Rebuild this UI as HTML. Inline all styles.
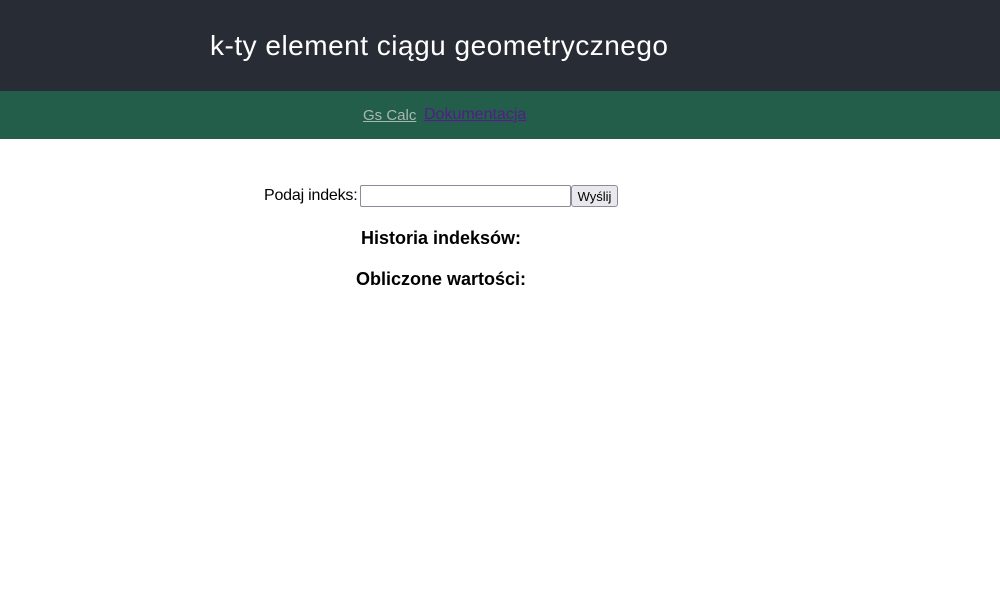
<!DOCTYPE html>
<html><head><meta charset="utf-8"><style>
body{margin:0;width:1000px;height:600px;background:#fff;font-family:"Liberation Sans",sans-serif;position:relative;overflow:hidden}
.hdr{position:absolute;left:0;top:0;width:1000px;height:91px;background:#282c34}
.hdr h1{position:absolute;left:210px;top:29px;margin:0;font-weight:normal;font-size:28px;line-height:34px;color:#fff;white-space:nowrap;letter-spacing:0.5px}
.nav{position:absolute;left:0;top:91px;width:1000px;height:48px;background:#235e4a}
.nav a{position:absolute;top:14px;font-size:16px;line-height:20px;text-decoration:underline;white-space:nowrap}
.lbl{position:absolute;left:264px;top:185px;font-size:16px;line-height:22px;letter-spacing:-0.2px}
input{position:absolute;left:360px;top:185px;width:211px;height:22px;box-sizing:border-box;border:1px solid #8d8a9a;border-radius:2px;margin:0;padding:0}
button{position:absolute;left:571px;top:185px;width:47px;height:22px;box-sizing:border-box;border:1px solid #8d8a9a;border-radius:3px;background:#e9e9ed;font-family:"Liberation Sans",sans-serif;font-size:13px;padding:0;margin:0}
h3{position:absolute;left:0;width:882px;text-align:center;margin:0;font-size:18px;line-height:24px;font-weight:bold}
</style></head><body>
<div class="hdr"><h1>k-ty element ciągu geometrycznego</h1></div>
<div class="nav"><a style="left:363px;color:#a9b8b2;font-size:15px;top:15px">Gs Calc</a><a style="left:424px;color:#551a8b">Dokumentacja</a></div>
<div class="lbl">Podaj indeks:</div>
<input type="text"><button>Wyślij</button>
<h3 style="top:226px">Historia indeksów:</h3>
<h3 style="top:267px">Obliczone wartości:</h3>
</body></html>
